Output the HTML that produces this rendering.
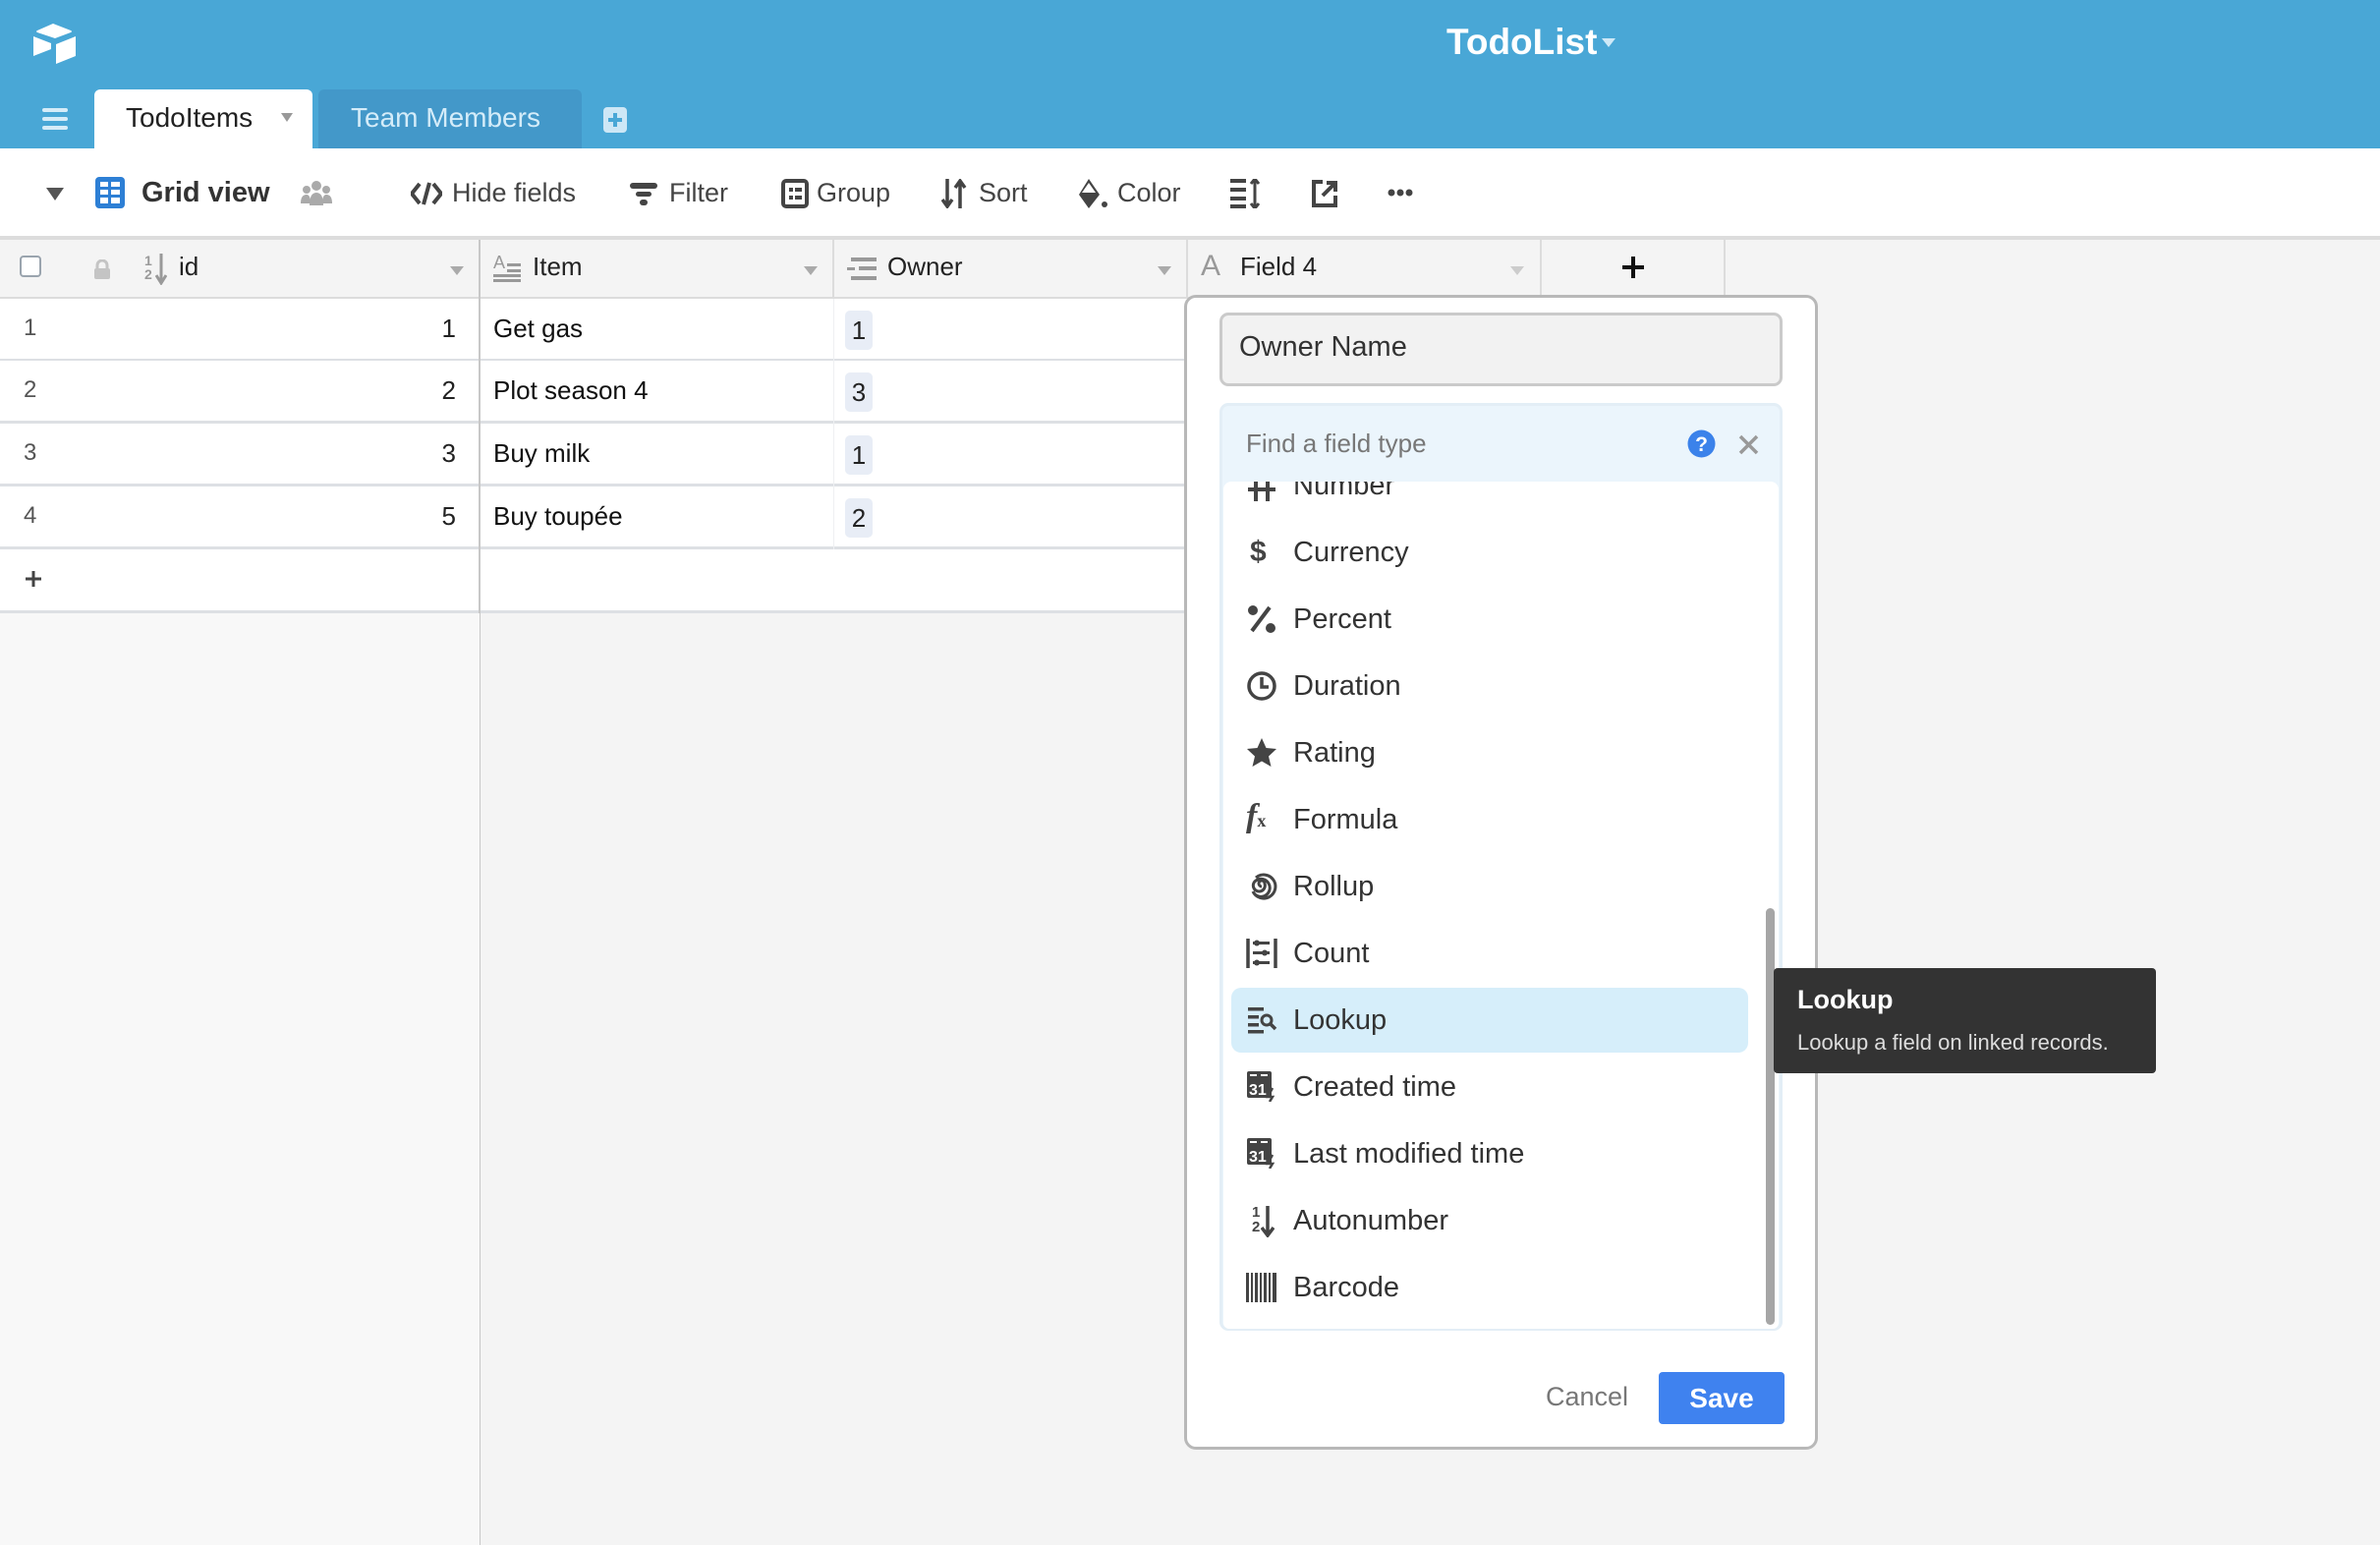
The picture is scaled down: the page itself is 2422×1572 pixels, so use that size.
<!DOCTYPE html>
<html><head><meta charset="utf-8"><style>
*{margin:0;padding:0;box-sizing:border-box}
body{width:2422px;height:1572px;position:relative;overflow:hidden;background:#f4f4f4;font-family:"Liberation Sans",sans-serif;color:#333}
.a{position:absolute}
.hdr{left:0;top:0;width:2422px;height:151px;background:#49a7d6}
.tb{left:0;top:151px;width:2422px;height:90px;background:#fff}
.ti{position:absolute;top:176px;font-size:27px;color:#444;line-height:40px;white-space:nowrap}
.hrow{left:0;top:240px;width:2422px;height:64px;background:#f4f4f4;border-top:4px solid #dcdcdc;border-bottom:2px solid #dcdcdc}
.hc{position:absolute;top:256px;font-size:26px;color:#222;line-height:30px}
.vl{position:absolute;width:2px;background:#dcdcdc}
.row{position:absolute;left:0;width:1208px;height:64px;background:#fff;border-bottom:3px solid #dde0e4}
.rn{position:absolute;left:24px;font-size:24px;color:#555;top:16px}
.rid{position:absolute;right:744px;font-size:26px;color:#222;top:15px}
.rit{position:absolute;left:502px;font-size:26px;color:#111;top:15px}
.pill{position:absolute;left:860px;top:12px;width:28px;height:40px;background:#e8edf6;border-radius:5px;font-size:26px;color:#222;text-align:center;line-height:40px}
.li{position:absolute;left:1316px;font-size:29px;color:#333;line-height:36px;white-space:nowrap}
.ic{position:absolute;left:1268px;width:32px;height:32px}
</style></head><body>
<div class="a hdr"></div>
<svg class="a" style="left:32px;top:23px" width="48" height="42" viewBox="0 0 48 42"><path d="M22 1 L40 8 Q42 9 40 10 L24 16 L6 10 Q4 9 6 8 Z" fill="#fff"/><path d="M2 14 L2 34 L20 27 L20 21 Z" fill="#fff"/><path d="M25 22 L25 42 L45 34 L45 14 Z" fill="#fff"/></svg>
<div class="a" style="left:1472px;top:22px;font-size:37px;color:#fff;font-weight:bold">TodoList</div>
<svg class="a" style="left:1630px;top:39px" width="14" height="10"><path d="M0 0H14L7 9Z" fill="#cfe9f7"/></svg>
<svg class="a" style="left:43px;top:110px" width="26" height="22"><rect y="0" width="26" height="4" rx="2" fill="#d6ecf8"/><rect y="9" width="26" height="4" rx="2" fill="#d6ecf8"/><rect y="18" width="26" height="4" rx="2" fill="#d6ecf8"/></svg>
<div class="a" style="left:96px;top:91px;width:222px;height:62px;background:#fff;border-radius:6px 6px 0 0"></div>
<div class="a" style="left:128px;top:104px;font-size:28px;color:#222">TodoItems</div>
<svg class="a" style="left:286px;top:115px" width="12" height="9"><path d="M0 0H12L6 9Z" fill="#999"/></svg>
<div class="a" style="left:324px;top:91px;width:268px;height:60px;background:#4398c9;border-radius:6px 6px 0 0"></div>
<div class="a" style="left:357px;top:104px;font-size:28px;color:#d4ecf9">Team Members</div>
<svg class="a" style="left:614px;top:109px" width="24" height="26"><rect width="24" height="26" rx="4" fill="#cde7f6"/><path d="M12 6V20M5 13H19" stroke="#49a7d6" stroke-width="4"/></svg>

<div class="a tb"></div>
<svg class="a" style="left:47px;top:191px" width="18" height="13"><path d="M0 0H18L9 13Z" fill="#555"/></svg>
<svg class="a" style="left:97px;top:180px" width="30" height="32"><rect width="30" height="32" rx="4" fill="#2d7fd5"/><g fill="#fff"><rect x="5" y="5" width="8" height="5"/><rect x="16" y="5" width="9" height="5"/><rect x="5" y="13" width="8" height="5"/><rect x="16" y="13" width="9" height="5"/><rect x="5" y="21" width="8" height="6"/><rect x="16" y="21" width="9" height="6"/></g></svg>
<div class="ti" style="left:144px;font-weight:bold;font-size:29px;color:#333">Grid view</div>
<svg class="a" style="left:306px;top:183px" width="32" height="28"><g fill="#aaa"><circle cx="16" cy="6" r="5"/><circle cx="6" cy="10" r="4"/><circle cx="26" cy="10" r="4"/><path d="M9 26Q9 13 16 13Q23 13 23 26Z"/><path d="M0 24Q0 15 6 15Q10 15 10 24Z"/><path d="M22 24Q22 15 26 15Q32 15 32 24Z"/></g></svg>
<svg class="a" style="left:418px;top:185px" width="32" height="24"><path d="M9 2L1 12L9 22M23 2L31 12L23 22M19 1L13 23" stroke="#444" stroke-width="4" fill="none"/></svg>
<div class="ti" style="left:460px">Hide fields</div>
<svg class="a" style="left:641px;top:186px" width="28" height="24"><rect x="0" y="0" width="28" height="6" rx="3" fill="#444"/><rect x="6" y="9" width="16" height="5" rx="2.5" fill="#444"/><rect x="10" y="17" width="8" height="6" rx="3" fill="#444"/></svg>
<div class="ti" style="left:681px">Filter</div>
<svg class="a" style="left:795px;top:182px" width="28" height="30"><rect x="2" y="2" width="24" height="26" rx="3" stroke="#444" stroke-width="4" fill="none"/><g fill="#444"><rect x="8" y="9" width="4" height="4"/><rect x="14" y="9" width="7" height="4"/><rect x="8" y="17" width="4" height="4"/><rect x="14" y="17" width="7" height="4"/></g></svg>
<div class="ti" style="left:831px">Group</div>
<svg class="a" style="left:958px;top:182px" width="26" height="30"><path d="M6 0V26M1 21L6 28L11 21M19 30V4M14 9L19 2L24 9" stroke="#444" stroke-width="3.5" fill="none"/></svg>
<div class="ti" style="left:996px">Sort</div>
<svg class="a" style="left:1097px;top:180px" width="32" height="34"><path d="M11 2L22 18L11 32L1 18Z" fill="#444"/><path d="M11 6L18 16H4Z" fill="#fff"/><circle cx="27" cy="28" r="3" fill="#444"/></svg>
<div class="ti" style="left:1137px">Color</div>
<svg class="a" style="left:1252px;top:182px" width="32" height="30"><g fill="#444"><rect width="16" height="4"/><rect y="9" width="16" height="4"/><rect y="18" width="16" height="4"/><rect y="26" width="16" height="4"/></g><path d="M25 1V29M21 5L25 0L29 5M21 25L25 30L29 25" stroke="#444" stroke-width="3" fill="none"/></svg>
<svg class="a" style="left:1334px;top:182px" width="28" height="30"><path d="M12 3H3V27H25V17" stroke="#444" stroke-width="4" fill="none"/><path d="M12 17L24 5M16 4H25V13" stroke="#444" stroke-width="4" fill="none"/></svg>
<svg class="a" style="left:1412px;top:192px" width="26" height="8"><g fill="#444"><circle cx="4" cy="4" r="3.5"/><circle cx="13" cy="4" r="3.5"/><circle cx="22" cy="4" r="3.5"/></g></svg>

<div class="a hrow"></div>
<div class="a" style="left:1755px;top:244px;width:667px;height:60px;background:#f4f4f4"></div>
<div class="vl" style="left:487px;top:244px;height:1328px;background:#c8c8c8"></div>
<div class="vl" style="left:847px;top:244px;height:60px"></div>
<div class="vl" style="left:1207px;top:244px;height:60px"></div>
<div class="vl" style="left:1567px;top:244px;height:60px"></div>
<div class="vl" style="left:1754px;top:244px;height:60px"></div>
<div class="a" style="left:20px;top:260px;width:22px;height:22px;border:2.5px solid #9aa4ae;border-radius:4px;background:#fff"></div>
<svg class="a" style="left:96px;top:264px" width="16" height="20"><path d="M3 9V6A5 5 0 0 1 13 6V9" stroke="#c4c4c4" stroke-width="3" fill="none"/><rect y="9" width="16" height="11" rx="2" fill="#c4c4c4"/></svg>
<div class="a" style="left:147px;top:258px;font-size:14px;line-height:14px;color:#999;font-weight:bold">1<br>2</div>
<svg class="a" style="left:158px;top:258px" width="12" height="32"><path d="M6 0V28M1 22L6 30L11 22" stroke="#999" stroke-width="3" fill="none"/></svg>
<div class="hc" style="left:182px">id</div>
<svg class="a" style="left:458px;top:271px" width="14" height="9"><path d="M0 0H14L7 9Z" fill="#aaa"/></svg>
<svg class="a" style="left:502px;top:258px" width="30" height="30"><text x="0" y="15" font-size="18" fill="#999" font-family="Liberation Sans">A</text><g fill="#999"><rect x="14" y="10" width="14" height="3"/><rect x="14" y="16" width="14" height="3"/><rect x="0" y="21" width="28" height="3"/><rect x="0" y="26" width="28" height="3"/></g></svg>
<div class="hc" style="left:542px">Item</div>
<svg class="a" style="left:818px;top:271px" width="14" height="9"><path d="M0 0H14L7 9Z" fill="#aaa"/></svg>
<svg class="a" style="left:862px;top:262px" width="30" height="24"><g fill="#999"><rect x="4" y="0" width="26" height="4"/><rect x="0" y="10" width="8" height="3"/><rect x="12" y="9" width="18" height="4"/><rect x="4" y="19" width="26" height="4"/></g></svg>
<div class="hc" style="left:903px">Owner</div>
<svg class="a" style="left:1178px;top:271px" width="14" height="9"><path d="M0 0H14L7 9Z" fill="#aaa"/></svg>
<div class="a" style="left:1222px;top:254px;font-size:30px;color:#999">A</div>
<div class="hc" style="left:1262px">Field 4</div>
<svg class="a" style="left:1537px;top:271px" width="14" height="9"><path d="M0 0H14L7 9Z" fill="#ccc"/></svg>
<svg class="a" style="left:1651px;top:261px" width="22" height="22"><path d="M11 0V22M0 11H22" stroke="#111" stroke-width="4"/></svg>

<div class="a" style="left:0;top:304px;width:1208px;height:320px;background:#fff"></div>
<div class="a" style="left:0;top:624px;width:488px;height:948px;background:#f8f8f8"></div>
<div class="row" style="top:304px"><span class="rn">1</span><span class="rid">1</span><span class="rit">Get gas</span><span class="pill">1</span></div>
<div class="row" style="top:367px"><span class="rn">2</span><span class="rid">2</span><span class="rit">Plot season 4</span><span class="pill">3</span></div>
<div class="row" style="top:431px"><span class="rn">3</span><span class="rid">3</span><span class="rit">Buy milk</span><span class="pill">1</span></div>
<div class="row" style="top:495px"><span class="rn">4</span><span class="rid">5</span><span class="rit">Buy toupée</span><span class="pill">2</span></div>
<div class="row" style="top:559px;height:65px"><svg class="a" style="left:26px;top:22px" width="16" height="16"><path d="M8 0V16M0 8H16" stroke="#444" stroke-width="3"/></svg></div>
<div class="vl" style="left:487px;top:304px;height:320px;background:#c8c8c8"></div>
<div class="vl" style="left:848px;top:304px;height:255px;background:#eef0f2;width:1px"></div>

<div class="a" style="left:1205px;top:300px;width:645px;height:1175px;background:#fff;border:3px solid #b8b8b8;border-radius:12px"></div>
<div class="a" style="left:1241px;top:318px;width:573px;height:75px;background:#f2f2f2;border:3px solid #cacaca;border-radius:9px"></div>
<div class="a" style="left:1261px;top:337px;font-size:29px;color:#333">Owner Name</div>
<div class="a" style="left:1241px;top:410px;width:573px;height:944px;background:#ebf5fc;border:3px solid #e3eef6;border-radius:9px"></div>
<div class="a" style="left:1245px;top:490px;width:565px;height:862px;background:#fff;border-radius:8px 8px 6px 6px"></div>
<div class="a" style="left:1268px;top:436px;font-size:26px;color:#777">Find a field type</div>
<svg class="a" style="left:1717px;top:437px" width="29" height="29"><circle cx="14.5" cy="14.5" r="14" fill="#3b82ea"/><text x="14.5" y="22" text-anchor="middle" font-size="21" font-weight="bold" fill="#fff" font-family="Liberation Sans">?</text></svg>
<svg class="a" style="left:1769px;top:442px" width="21" height="21"><path d="M2 2L19 19M19 2L2 19" stroke="#999" stroke-width="3.5"/></svg>

<div class="a" style="left:1245px;top:490px;width:565px;height:24px;overflow:hidden"><div class="li" style="left:71px;top:-14px;font-weight:normal">Number</div><svg class="a" style="left:23px;top:0" width="32" height="20"><path d="M10 0V20M22 0V20M2 8H30" stroke="#444" stroke-width="4"/></svg></div>
<div class="a" style="left:1253px;top:1005px;width:526px;height:66px;background:#d6eefa;border-radius:10px"></div>
<div class="a" style="left:1797px;top:924px;width:9px;height:424px;background:#a6a6a6;border-radius:5px"></div>

<div class="li" style="top:544px">Currency</div>
<div class="ic" style="top:546px;font-size:30px;font-weight:bold;color:#444;line-height:32px;left:1272px">$</div>
<div class="li" style="top:612px">Percent</div>
<svg class="ic" style="top:614px" viewBox="0 0 32 32"><circle cx="7" cy="7" r="5" fill="#444"/><circle cx="25" cy="25" r="5" fill="#444"/><path d="M24 4L6 28" stroke="#444" stroke-width="4"/></svg>
<div class="li" style="top:680px">Duration</div>
<svg class="ic" style="top:682px" viewBox="0 0 32 32"><circle cx="16" cy="16" r="13" stroke="#444" stroke-width="3.5" fill="none"/><path d="M16 7V17H23" stroke="#444" stroke-width="3.5" fill="none"/></svg>
<div class="li" style="top:748px">Rating</div>
<svg class="ic" style="top:750px" viewBox="0 0 32 32"><path d="M16 1L20.5 11L31 12L23 19.5L25.5 30L16 24.5L6.5 30L9 19.5L1 12L11.5 11Z" fill="#444"/></svg>
<div class="li" style="top:816px">Formula</div>
<div class="ic" style="top:814px;font-family:'Liberation Serif',serif;font-style:italic;font-weight:bold;font-size:34px;color:#444;line-height:34px">f<span style="font-size:18px;font-style:normal">x</span></div>
<div class="li" style="top:884px">Rollup</div>
<svg class="ic" style="top:886px" viewBox="0 0 32 32"><path d="M16 16a3 3 0 1 1 3 -3a6 6 0 1 1 -9 -3a9 9 0 1 1 -3 11a12 12 0 1 0 3 -14" stroke="#444" stroke-width="3" fill="none"/></svg>
<div class="li" style="top:952px">Count</div>
<svg class="ic" style="top:954px" viewBox="0 0 32 32"><path d="M2 1V31M30 1V31" stroke="#444" stroke-width="3.5"/><g fill="#444"><rect x="7" y="4" width="17" height="3"/><rect x="7" y="14" width="17" height="3"/><rect x="7" y="24" width="17" height="3"/><circle cx="11" cy="5.5" r="3"/><circle cx="19" cy="15.5" r="3"/><circle cx="11" cy="25.5" r="3"/></g></svg>
<div class="li" style="top:1020px">Lookup</div>
<svg class="ic" style="top:1022px" viewBox="0 0 32 32"><g fill="#444"><rect x="2" y="3" width="16" height="3.5"/><rect x="2" y="11" width="11" height="3.5"/><rect x="2" y="19" width="11" height="3.5"/><rect x="2" y="26" width="16" height="3.5"/></g><circle cx="21" cy="16" r="5" stroke="#444" stroke-width="3" fill="none"/><path d="M24.5 19.5L30 25" stroke="#444" stroke-width="3.5"/></svg>
<div class="li" style="top:1088px">Created time</div>
<svg class="ic" style="top:1089px" viewBox="0 0 32 32"><rect x="1" y="1" width="25" height="27" rx="2" fill="#444"/><rect x="4" y="4" width="7" height="2" fill="#fff"/><rect x="15" y="4" width="7" height="2" fill="#fff"/><text x="3" y="25" font-size="16" font-weight="bold" fill="#fff" font-family="Liberation Sans">31</text><path d="M27 18L22 27H27L24 32" stroke="#444" stroke-width="2.5" fill="none"/></svg>
<div class="li" style="top:1156px">Last modified time</div>
<svg class="ic" style="top:1157px" viewBox="0 0 32 32"><rect x="1" y="1" width="25" height="27" rx="2" fill="#444"/><rect x="4" y="4" width="7" height="2" fill="#fff"/><rect x="15" y="4" width="7" height="2" fill="#fff"/><text x="3" y="25" font-size="16" font-weight="bold" fill="#fff" font-family="Liberation Sans">31</text><path d="M27 18L22 27H27L24 32" stroke="#444" stroke-width="2.5" fill="none"/></svg>
<div class="li" style="top:1224px">Autonumber</div>
<div class="a" style="left:1274px;top:1226px;font-size:15px;line-height:15px;color:#444;font-weight:bold">1<br>2</div>
<svg class="a" style="left:1283px;top:1227px" width="14" height="32"><path d="M7 0V28M1 22L7 30L13 22" stroke="#444" stroke-width="3.5" fill="none"/></svg>
<div class="li" style="top:1292px">Barcode</div>
<svg class="ic" style="top:1294px" viewBox="0 0 32 32"><g fill="#444"><rect x="0" y="1" width="3" height="30"/><rect x="5" y="1" width="2" height="30"/><rect x="9" y="1" width="3" height="30"/><rect x="14" y="1" width="2" height="30"/><rect x="18" y="1" width="3" height="30"/><rect x="23" y="1" width="2" height="30"/><rect x="27" y="1" width="4" height="30"/></g></svg>

<div class="a" style="left:1573px;top:1406px;font-size:27px;color:#777">Cancel</div>
<div class="a" style="left:1688px;top:1396px;width:128px;height:53px;background:#3f82ef;border-radius:4px;color:#fff;font-weight:bold;font-size:28px;text-align:center;line-height:53px">Save</div>

<div class="a" style="left:1805px;top:985px;width:389px;height:107px;background:#333;border-radius:4px"></div>
<div class="a" style="left:1829px;top:1002px;font-size:27px;font-weight:bold;color:#fff">Lookup</div>
<div class="a" style="left:1829px;top:1048px;font-size:22px;color:#ddd">Lookup a field on linked records.</div>
</body></html>
